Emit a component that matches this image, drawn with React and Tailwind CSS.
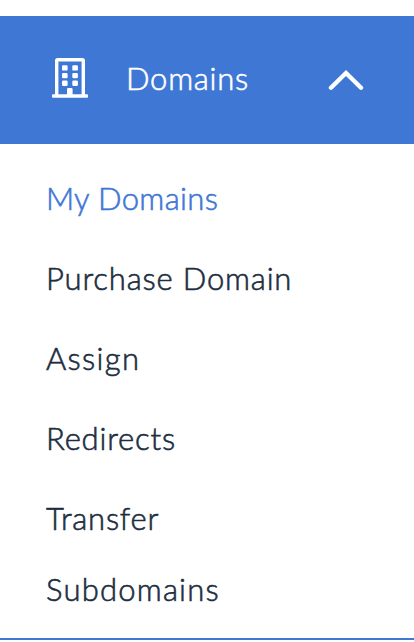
import React, { useState } from 'react';

const items = [
    { label: 'My Domains', row: 'h-20', text: 'tracking-[0.35px]' },
    { label: 'Purchase Domain', row: 'h-20', text: 'tracking-[0.83px]' },
    { label: 'Assign', row: 'h-20', text: 'tracking-[1.3px]' },
    { label: 'Redirects', row: 'h-20', text: 'tracking-[0.8px]' },
    { label: 'Transfer', row: 'h-20', text: 'tracking-[0.75px]' },
    { label: 'Subdomains', row: 'h-[62px]', text: 'tracking-[1.2px]' },
];

const BuildingIcon = () => (
    <svg className="mb-1" width="36" height="40" viewBox="0 0 36 40" fill="none" aria-hidden="true">
        <path d="M4.7 37V2.7a1 1 0 0 1 1-1h24.6a1 1 0 0 1 1 1V37" stroke="currentColor" strokeWidth="3.4" />
        <rect x="0" y="36.2" width="36" height="3.6" rx="1" fill="currentColor" />
        <g fill="currentColor">
            <rect x="10" y="7.2" width="5.6" height="5.4" rx="1.2" />
            <rect x="20.3" y="7.2" width="5.6" height="5.4" rx="1.2" />
            <rect x="10" y="14.9" width="5.6" height="5.4" rx="1.2" />
            <rect x="20.3" y="14.9" width="5.6" height="5.4" rx="1.2" />
            <rect x="10" y="22.6" width="5.6" height="5.4" rx="1.2" />
            <rect x="20.3" y="22.6" width="5.6" height="5.4" rx="1.2" />
            <path d="M15 37v-5.6a1.4 1.4 0 0 1 1.4-1.4h2.8a1.4 1.4 0 0 1 1.4 1.4V37z" />
        </g>
    </svg>
);

const Chevron = () => (
    <svg width="36" height="22" viewBox="0 0 36 22" fill="none" aria-hidden="true">
        <path d="M3 18.7 18 4l15 14.7" stroke="currentColor" strokeWidth="4.4" strokeLinecap="round" />
    </svg>
);

const App = () => {
    const [active, setActive] = useState('My Domains');

    return (
        <div className="h-[642px] w-full overflow-hidden bg-white pt-4 font-['Lato',sans-serif] font-light [-webkit-text-stroke-width:0.6px]">
            <button className="flex h-32 w-full items-center bg-[#3f77d5] pr-[50px] pl-[52px] text-white">
                <BuildingIcon />
                <span className="mb-1 ml-[38px] text-[31px] leading-10 tracking-[0.75px]">Domains</span>
                <span className="ml-auto">
                    <Chevron />
                </span>
            </button>

            <nav className="flex h-[496px] flex-col border-b-2 border-[#3f77d5] pt-[14px] pl-[46px]">
                {items.map((item) => (
                    <button
                        key={item.label}
                        onClick={() => setActive(item.label)}
                        className={`flex shrink-0 items-center text-[31px] leading-10 whitespace-nowrap ${item.row} ${item.text} ${active === item.label ? 'text-[#3f77d5]' : 'text-[#202d40]'}`}
                    >
                        {item.label}
                    </button>
                ))}
            </nav>
        </div>
    );
};

export default App;
